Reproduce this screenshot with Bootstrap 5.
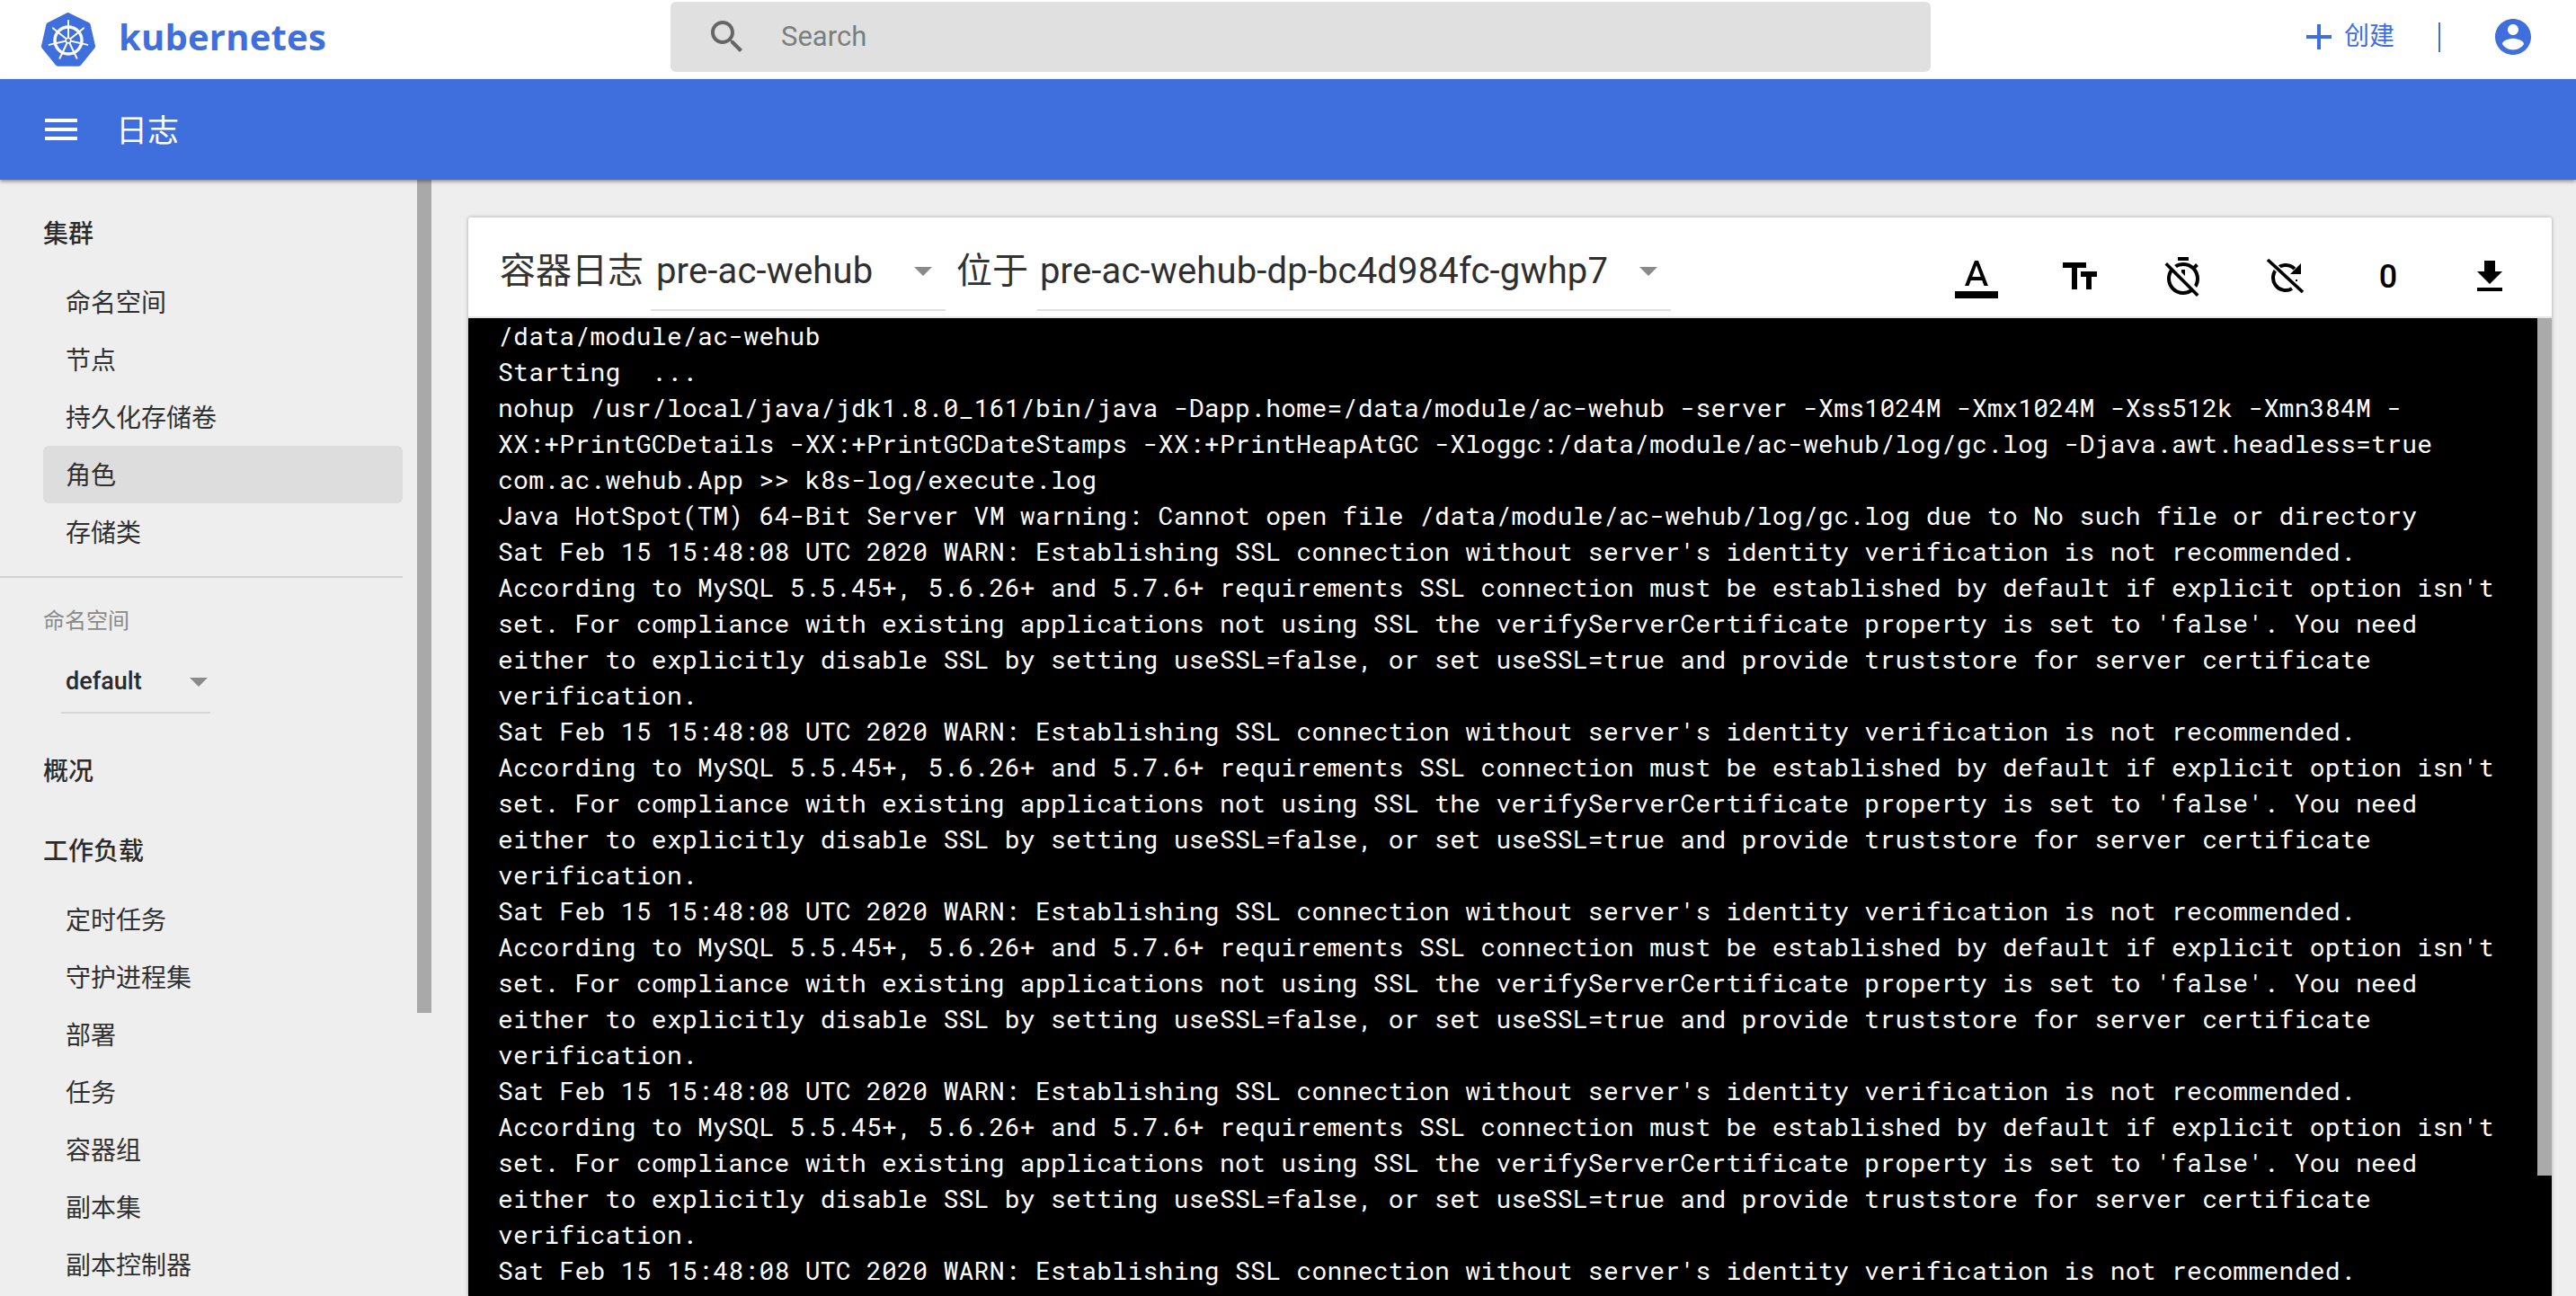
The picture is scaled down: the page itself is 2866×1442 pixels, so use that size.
<!DOCTYPE html>
<html lang="zh">
<head>
<meta charset="utf-8">
<title>日志 - Kubernetes Dashboard</title>
<link href="https://cdn.jsdelivr.net/npm/bootstrap@5.3.0/dist/css/bootstrap.min.css" rel="stylesheet">
<style>
html,body{height:100%;overflow:hidden}
body{background:#eee;color:#212121;font-family:Roboto,"Noto Sans CJK SC",sans-serif}
.k-top{height:88px;background:#fff;padding-bottom:6px}
.k-logo{width:60px;height:60px;margin-left:46px;margin-top:6px}
.k-brand{font-family:"Open Sans","DejaVu Sans",sans-serif;font-weight:700;font-size:40px;color:#3f6fdd;margin-left:26px;width:614px;line-height:1;letter-spacing:.2px}
.k-search{width:1402px;height:78px;background:#e0e0e0;border-radius:6px;padding-left:39px}
.k-search svg{width:48px;height:48px;fill:#666}
.k-search span{font-size:31px;color:#7d7d7d;margin-left:36px}
.k-act{color:#3f6fdd;fill:#3f6fdd;margin-left:auto;margin-right:46px}
.k-create{font-size:28px;line-height:1;margin-left:4px;margin-right:49px}
.k-act i{display:block;width:2px;height:33px;background:#3f6fdd;margin-right:57px}
.k-act svg{display:block}
.k-bar{height:112px;background:#3f6fdd;color:#fff;padding-left:44px;box-shadow:0 2px 4px rgba(0,0,0,.4);position:relative;z-index:2}
.k-bar svg{width:48px;height:48px;fill:#fff}
.k-bar span{font-size:35px;margin-left:37px;margin-top:6px}
.k-main{height:1242px}
.k-side{width:464px;flex:none;overflow:hidden;padding-top:37px}
.k-sec{font-size:28px;font-weight:500;height:48px;line-height:48px;padding-left:48px;color:#2b2b2b}
.k-list1{margin-top:19px}
.k-list2{margin-top:19px}
.k-item{height:64px;line-height:67px;font-size:28px;width:400px;margin-left:48px;padding-left:25px;border-radius:6px;color:#303030}
.k-item.on{background:#ddd}
.k-rule{height:2px;width:448px;background:#d2d2d2;margin-top:17px}
.k-lab{font-size:24px;color:#8a8a8a;padding-left:48px;margin-top:30px;line-height:36px}
.k-ns{margin-left:68px;width:166px;height:72px;margin-top:13px;border-bottom:2px solid #d6d6d6;padding-left:5px;padding-right:3px;padding-top:3px;font-size:27px;font-weight:500;color:#2b2b2b}
.k-sec.gap{margin-top:41px}
.k-tri{width:0;height:0;border-left:10px solid transparent;border-right:10px solid transparent;border-top:10px solid #8a8a8a;display:block;flex:none}
.k-track{width:16px;flex:none;height:927px;background:#a9a9a9}
.k-content{flex:1;min-width:0;padding:42px 27px 0 41px}
.k-card{background:#fff;box-shadow:0 0 4px rgba(0,0,0,.3);height:1200px;border-radius:3px 3px 0 0;overflow:hidden}
.k-tool{height:110px;padding-left:35px}
.k-txt{font-size:40px;line-height:40px;color:#333;white-space:nowrap;margin-top:40px}
.k-sel{height:64px;border-bottom:2px solid #e0e0e0;margin-top:40px;font-size:40px;line-height:40px;letter-spacing:.15px;color:#2f2f2f;white-space:nowrap;padding-right:15px}
.k-sel .k-tri{margin-top:15px}
.k-sel.a{width:328px;margin-left:8px;margin-right:12px;padding-left:6px}
.k-sel.b{width:705px;margin-left:10px;padding-left:3px}
.k-ic{margin-left:auto;margin-top:42px;padding-right:45px}
.k-ic svg{width:48px;height:48px;display:block;flex:none;fill:#000}
.k-m67{margin-right:67px}
.k-m68{margin-right:68px}
.k-m77{margin-right:77px}
.k-num{font-size:36px;line-height:48px;font-weight:500;color:#000;width:22px;text-align:center;margin-right:78px}
.k-gap{height:2px;background:#e6e6e6}
.k-log{height:1088px;background:#000;overflow:hidden}
.k-lines{flex:1;min-width:0;margin:0;padding:0 0 0 33px;background:#000;color:#fff;font-family:"Roboto Mono","DejaVu Sans Mono","Liberation Mono",monospace;font-size:28px;line-height:40px;letter-spacing:.28px;white-space:pre;overflow:hidden}
.k-thumb{width:16px;flex:none;height:954px;background:#aaa}
</style>
</head>
<body>
<header class="k-top d-flex align-items-center">
  <svg class="k-logo flex-shrink-0" viewBox="0 0 60 60" aria-label="Kubernetes">
    <path d="M30 0 53 11.2a3 3 0 0 1 1.6 2L60 37a3 3 0 0 1-.6 2.5L44 58.6a3 3 0 0 1-2.3 1.1H18.3a3 3 0 0 1-2.3-1.1L.6 39.500A3 3 0 0 1 0 37l5.400-23.800a3 3 0 0 1 1.600-2L28.600.3a3 3 0 0 1 1.400-.3z" fill="#3f6fdd"/>
    <g stroke="#fff" fill="none" stroke-linecap="round">
      <circle cx="30" cy="31" r="15" stroke-width="3.4"/>
      <g stroke-width="2">
        <path d="M30 31V9"/><path d="M30 31 47.200 17.300"/><path d="M30 31 51.400 35.900"/><path d="M30 31 39.500 50.800"/><path d="M30 31 20.500 50.800"/><path d="M30 31 8.600 35.900"/><path d="M30 31 12.800 17.300"/>
      </g>
    </g>
    <circle cx="30" cy="31" r="3.500" fill="#fff"/><circle cx="30" cy="31" r="2" fill="#3f6fdd"/>
  </svg>
  <div class="k-brand">kubernetes</div>
  <div class="k-search d-flex align-items-center">
    <svg viewBox="0 0 24 24"><path d="M15.5 14h-.79l-.28-.27C15.41 12.59 16 11.11 16 9.5 16 5.91 13.09 3 9.5 3S3 5.91 3 9.5 5.91 16 9.5 16c1.61 0 3.09-.59 4.23-1.57l.27.28v.79l5 4.99L20.49 19l-4.99-5zm-6 0C7.01 14 5 11.99 5 9.5S7.01 5 9.5 5 14 7.01 14 9.5 11.99 14 9.5 14z"/></svg>
    <span>Search</span>
  </div>
  <div class="k-act d-flex align-items-center">
    <svg width="48" height="48" viewBox="0 0 24 24"><path d="M19 13h-6v6h-2v-6H5v-2h6V5h2v6h6v2z"/></svg>
    <span class="k-create">创建</span>
    <i></i>
    <svg width="48" height="48" viewBox="0 0 24 24"><path d="M12 2C6.48 2 2 6.48 2 12s4.48 10 10 10 10-4.48 10-10S17.52 2 12 2zm0 3c1.66 0 3 1.34 3 3s-1.34 3-3 3-3-1.34-3-3 1.34-3 3-3zm0 14.2c-2.5 0-4.71-1.28-6-3.22.03-1.99 4-3.08 6-3.08 1.99 0 5.97 1.09 6 3.08-1.29 1.94-3.5 3.22-6 3.22z"/></svg>
  </div>
</header>
<div class="k-bar d-flex align-items-center">
  <svg viewBox="0 0 24 24"><path d="M3 18h18v-2H3v2zm0-5h18v-2H3v2zm0-7v2h18V6H3z"/></svg>
  <span>日志</span>
</div>
<main class="k-main d-flex">
  <nav class="k-side">
    <div class="k-sec">集群</div>
    <div class="k-list1">
      <div class="k-item">命名空间</div>
      <div class="k-item">节点</div>
      <div class="k-item">持久化存储卷</div>
      <div class="k-item on">角色</div>
      <div class="k-item">存储类</div>
    </div>
    <div class="k-rule"></div>
    <div class="k-lab">命名空间</div>
    <div class="k-ns d-flex align-items-center justify-content-between"><span>default</span><span class="k-tri"></span></div>
    <div class="k-sec gap">概况</div>
    <div class="k-sec gap">工作负载</div>
    <div class="k-list2">
      <div class="k-item">定时任务</div>
      <div class="k-item">守护进程集</div>
      <div class="k-item">部署</div>
      <div class="k-item">任务</div>
      <div class="k-item">容器组</div>
      <div class="k-item">副本集</div>
      <div class="k-item">副本控制器</div>
    </div>
  </nav>
  <div class="k-track"></div>
  <section class="k-content">
    <div class="k-card">
      <div class="k-tool d-flex align-items-start">
        <span class="k-txt">容器日志</span>
        <div class="k-sel a d-flex align-items-start justify-content-between"><span>pre-ac-wehub</span><span class="k-tri"></span></div>
        <span class="k-txt">位于</span>
        <div class="k-sel b d-flex align-items-start justify-content-between"><span>pre-ac-wehub-dp-bc4d984fc-gwhp7</span><span class="k-tri"></span></div>
        <div class="k-ic d-flex align-items-center">
          <svg viewBox="0 0 24 24" class="k-m67"><path d="M0 20h24v4H0z"/><path d="M11 3 5.500 17h2.250l1.120-3h6.250l1.120 3h2.250L13 3h-2zm-1.380 9L12 5.670 14.380 12H9.620z"/></svg>
          <svg viewBox="0 0 24 24" class="k-m67"><path d="M2.500 4v3h5v12h3V7h5V4h-13zm19 5h-9v3h3v7h3v-7h3V9z"/></svg>
          <svg viewBox="0 0 24 24" class="k-m68"><path d="M19.040 4.550l-1.420 1.420C16.070 4.740 14.120 4 12 4c-1.830 0-3.530.55-4.950 1.480l1.460 1.460C9.530 6.350 10.730 6 12 6c3.870 0 7 3.130 7 7 0 1.270-.35 2.470-.94 3.490l1.450 1.450C20.450 16.530 21 14.830 21 13c0-2.120-.74-4.070-1.970-5.610l1.420-1.420-1.410-1.420zM15 1H9v2h6V1zm-4 8.440l2 2V8h-2v1.440zM3.020 4L1.750 5.270 4.500 8.030C3.550 9.450 3 11.160 3 13c0 4.970 4.020 9 8.990 9 1.840 0 3.550-.55 4.980-1.500l2.500 2.500 1.270-1.270-7.710-7.710L3.020 4zM12 20c-3.870 0-7-3.130-7-7 0-1.280.35-2.480.95-3.520l9.560 9.560c-1.030.61-2.230.96-3.510.96z"/></svg>
          <svg viewBox="0 0 24 24" class="k-m77"><path d="M15.950 7.550A7 7 0 1 0 14.500 18.560" fill="none" stroke="#000" stroke-width="2"/><path d="M19.500 4.500v6h-6z"/><path d="M16.500 13.500h1v1h-1z"/><path d="M1 2.500 20.500 20.500" stroke="#fff" stroke-width="3.400"/><path d="M1 2.500 20.500 20.500" stroke="#000" stroke-width="1.800"/></svg>
          <span class="k-num">0</span>
          <svg viewBox="0 0 24 24"><path d="M19 9h-4V3H9v6H5l7 7 7-7zM5 18v2h14v-2H5z"/></svg>
        </div>
      </div>
      <div class="k-gap"></div>
      <div class="k-log d-flex">
<pre class="k-lines">/data/module/ac-wehub
Starting  ...
nohup /usr/local/java/jdk1.8.0_161/bin/java -Dapp.home=/data/module/ac-wehub -server -Xms1024M -Xmx1024M -Xss512k -Xmn384M -
XX:+PrintGCDetails -XX:+PrintGCDateStamps -XX:+PrintHeapAtGC -Xloggc:/data/module/ac-wehub/log/gc.log -Djava.awt.headless=true
com.ac.wehub.App &gt;&gt; k8s-log/execute.log
Java HotSpot(TM) 64-Bit Server VM warning: Cannot open file /data/module/ac-wehub/log/gc.log due to No such file or directory
Sat Feb 15 15:48:08 UTC 2020 WARN: Establishing SSL connection without server's identity verification is not recommended.
According to MySQL 5.5.45+, 5.6.26+ and 5.7.6+ requirements SSL connection must be established by default if explicit option isn't
set. For compliance with existing applications not using SSL the verifyServerCertificate property is set to 'false'. You need
either to explicitly disable SSL by setting useSSL=false, or set useSSL=true and provide truststore for server certificate
verification.
Sat Feb 15 15:48:08 UTC 2020 WARN: Establishing SSL connection without server's identity verification is not recommended.
According to MySQL 5.5.45+, 5.6.26+ and 5.7.6+ requirements SSL connection must be established by default if explicit option isn't
set. For compliance with existing applications not using SSL the verifyServerCertificate property is set to 'false'. You need
either to explicitly disable SSL by setting useSSL=false, or set useSSL=true and provide truststore for server certificate
verification.
Sat Feb 15 15:48:08 UTC 2020 WARN: Establishing SSL connection without server's identity verification is not recommended.
According to MySQL 5.5.45+, 5.6.26+ and 5.7.6+ requirements SSL connection must be established by default if explicit option isn't
set. For compliance with existing applications not using SSL the verifyServerCertificate property is set to 'false'. You need
either to explicitly disable SSL by setting useSSL=false, or set useSSL=true and provide truststore for server certificate
verification.
Sat Feb 15 15:48:08 UTC 2020 WARN: Establishing SSL connection without server's identity verification is not recommended.
According to MySQL 5.5.45+, 5.6.26+ and 5.7.6+ requirements SSL connection must be established by default if explicit option isn't
set. For compliance with existing applications not using SSL the verifyServerCertificate property is set to 'false'. You need
either to explicitly disable SSL by setting useSSL=false, or set useSSL=true and provide truststore for server certificate
verification.
Sat Feb 15 15:48:08 UTC 2020 WARN: Establishing SSL connection without server's identity verification is not recommended.</pre>
        <div class="k-thumb"></div>
      </div>
    </div>
  </section>
</main>
</body>
</html>
